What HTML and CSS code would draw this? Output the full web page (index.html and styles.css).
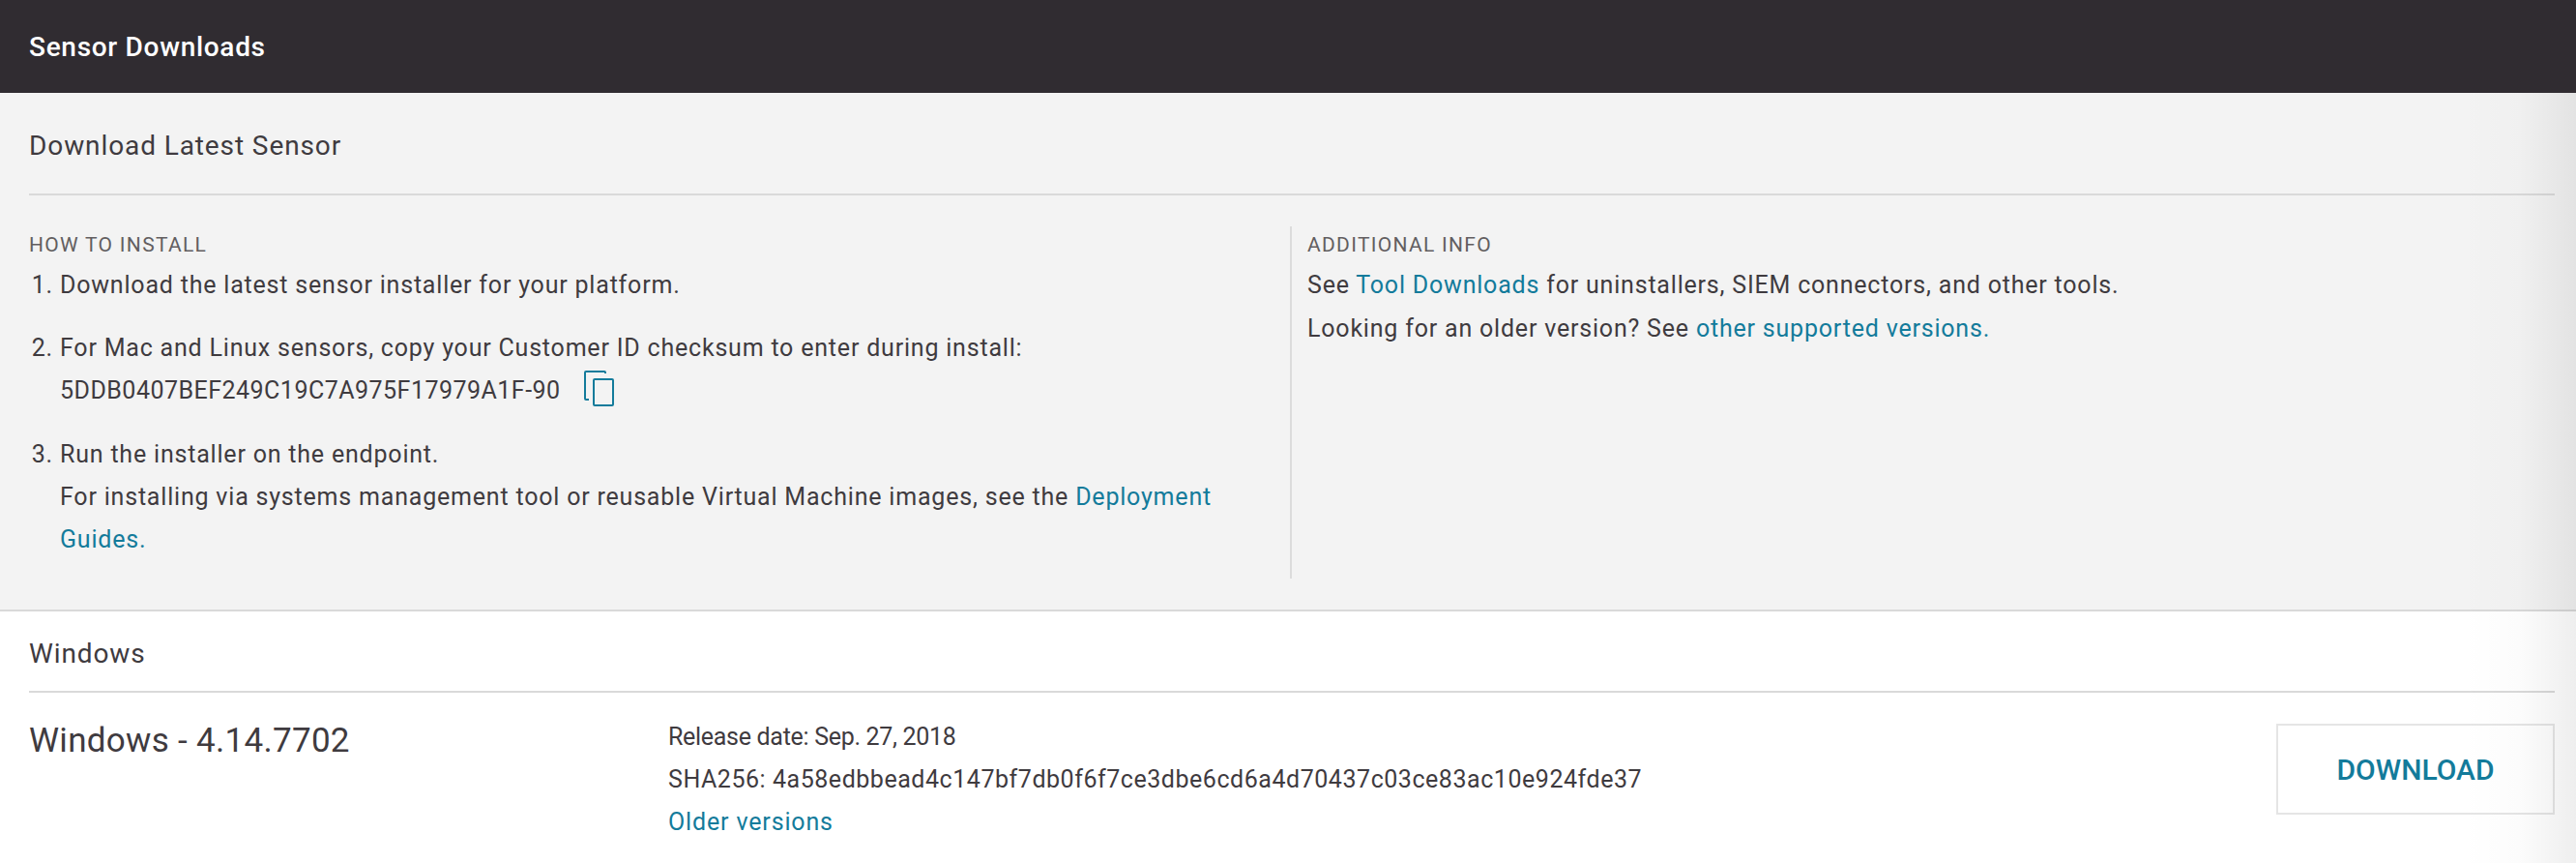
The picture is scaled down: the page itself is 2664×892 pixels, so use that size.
FILE: index.html
```html
<!DOCTYPE html>
<html lang="en">
<head>
<meta charset="utf-8">
<title>Sensor Downloads</title>
<link rel="stylesheet" href="styles.css">
</head>
<body>
<header class="topbar"><h1 class="topbar-title">Sensor Downloads</h1></header>
<section class="latest">
  <h2 class="section-title">Download Latest Sensor</h2>
  <div class="columns">
    <div class="col-left">
      <h3 class="label">HOW TO INSTALL</h3>
      <ol class="steps">
        <li>Download the latest sensor installer for your platform.</li>
        <li>For Mac and Linux sensors, copy your Customer ID checksum to enter during install:<br>
          <span class="checksum">5DDB0407BEF249C19C7A975F17979A1F-90</span>
          <svg class="copy-icon" width="32" height="38" viewBox="0 0 32 38" fill="none" stroke="#137b9b" stroke-width="2" aria-hidden="true">
            <path d="M22 3V2a1 1 0 0 0-1-1H2a1 1 0 0 0-1 1v27a1 1 0 0 0 1 1h3"/>
            <rect x="10" y="9" width="20" height="27" rx="1"/>
          </svg>
        </li>
        <li>Run the installer on the endpoint.<br>For installing via systems management tool or reusable Virtual Machine images, see the <a href="#" class="link">Deployment</a> <a href="#" class="link">Guides.</a></li>
      </ol>
    </div>
    <div class="col-right">
      <h3 class="label">ADDITIONAL INFO</h3>
      <p class="info">See <a href="#" class="link">Tool Downloads</a> for uninstallers, SIEM connectors, and other tools.</p>
      <p class="info">Looking for an older version? See <a href="#" class="link">other supported versions.</a></p>
    </div>
  </div>
</section>
<section class="platform">
  <h2 class="section-title platform-title">Windows</h2>
  <div class="release">
    <div class="version">Windows - 4.14.7702</div>
    <div class="meta">
      <div class="release-date">Release date: Sep. 27, 2018</div>
      <div class="sha">SHA256: 4a58edbbead4c147bf7db0f6f7ce3dbe6cd6a4d70437c03ce83ac10e924fde37</div>
      <a href="#" class="link older">Older versions</a>
    </div>
    <a href="#" class="download">DOWNLOAD</a>
  </div>
</section>
<div class="edge-shade"></div>
</body>
</html>
```
FILE: styles.css
```css
* { box-sizing: border-box; }
html, body { margin: 0; height: 892px; overflow: hidden; background: #fff; }
body { font-family: Roboto, "Liberation Sans", sans-serif; color: #3f3b3f; font-size: 25px; letter-spacing: .8px; position: relative; }
h1, h2, h3, p { margin: 0; font-weight: 400; }
.link { color: #137b9b; text-decoration: none; }

.topbar { height: 96px; background: #302c31; display: flex; align-items: center; padding: 0 30px; }
.topbar-title { color: #fff; font-size: 28px; font-weight: 500; letter-spacing: .7px; }

.latest { height: 536px; background: #f3f3f3; border-bottom: 2px solid #d9d9d9; padding: 0 22px 32px 30px; display: flex; flex-direction: column; }
.section-title { height: 106px; padding-top: 4px; display: flex; align-items: center; font-size: 28px; letter-spacing: .9px; border-bottom: 2px solid #d9d9d9; flex: none; }
.columns { display: flex; flex: 1; margin-top: 32px; }
.col-left { width: 1304px; flex: none; }
.col-right { flex: 1; border-left: 2px solid #dcdcdc; padding-left: 16px; height: 364px; }
.label { font-size: 21px; line-height: 39px; letter-spacing: 1.3px; color: #625e60; }

.steps { margin: 0; padding: 0 0 0 32px; line-height: 44px; }
.steps li { margin-bottom: 22px; padding-right: 20px; }
.steps li:first-child { margin-bottom: 21px; }
.checksum { letter-spacing: .48px; }
.copy-icon { vertical-align: -9px; margin-left: 17px; }
.info { line-height: 44px; }
.info + .info { margin-top: 1px; }

.platform-title { height: 84px; }
.platform { padding: 0 22px 0 30px; }
.release { display: flex; align-items: flex-start; padding-top: 24px; }
.version { width: 661px; font-size: 35px; line-height: 52px; letter-spacing: .3px; flex: none; }
.meta { flex: 1; line-height: 44px; }
.meta > div, .meta > a { display: block; }
.release-date { letter-spacing: -.3px; }
.sha { letter-spacing: .54px; }
.older { letter-spacing: .85px; }
.download { width: 288px; height: 94px; margin-top: 8px; border: 2px solid #e5e5e5; display: flex; align-items: center; justify-content: center; color: #137b9b; font-size: 30px; font-weight: 500; letter-spacing: 0; text-decoration: none; }

.edge-shade { position: absolute; top: 96px; right: 0; bottom: 0; width: 120px; background: linear-gradient(to right, rgba(0,0,0,0), rgba(0,0,0,.012) 50%, rgba(0,0,0,.065)); pointer-events: none; }
```
